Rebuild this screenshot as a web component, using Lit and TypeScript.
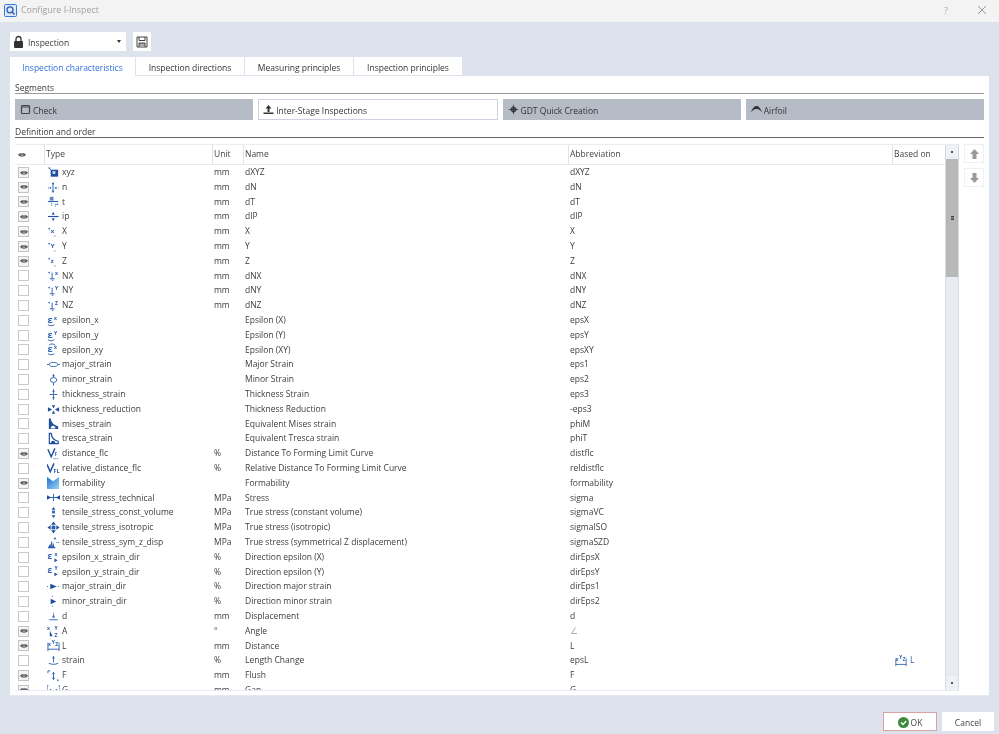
import { LitElement, html, css, svg } from "lit";
import { customElement } from "lit/decorators.js";

const B = "#2b5fb3";
const D = "#1f4f9e";
const letterIcon = (l: string) => svg`<path d="M1 4l2-1.200v2.400z M8.500 12.500l-1.500-1h3z" fill="${B}"/><text x="4" y="8.500" font-size="6.500" font-weight="700" fill="${B}" font-family="Open Sans">${l}</text>`;
const perp = (l: string) => svg`<path d="M1 4l2-1.200v2.400z M6 13l-1.400-1.400h2.800z" fill="${B}"/><path d="M3 10.500h5M5.500 4v6.500" stroke="${B}" stroke-width="1" fill="none"/><text x="8.500" y="6" font-size="5.500" font-weight="700" fill="${B}" font-family="Open Sans">${l}</text>`;
const eps = (l: string, extra = false) => svg`<text x="0.500" y="9.500" font-size="10" font-weight="700" fill="${B}" font-family="Open Sans">ε</text><text x="7.500" y="6" font-size="5.500" font-weight="700" fill="${B}" font-family="Open Sans">${l}</text><path d="M1 11.500c2 1.500 5 1.500 7 0" stroke="${B}" fill="none"/>${extra ? svg`<path d="M2 2.500c2-2 5-2 7 0" stroke="${B}" fill="none"/>` : ""}`;
const epsDir = (l: string) => svg`<text x="0.500" y="9" font-size="9" font-weight="700" fill="${B}" font-family="Open Sans">ε</text><text x="8" y="5.500" font-size="5.500" font-weight="700" fill="${B}" font-family="Open Sans">${l}</text><path d="M8 8l3.500 2L8 12z" fill="${D}"/>`;

const ICONS: Record<string, unknown> = {
  xyz: svg`<rect x="4" y="4" width="8" height="7.500" fill="${D}"/><rect x="6" y="5.500" width="3" height="3" fill="#cfdcf2"/><path d="M1 1.500l3 .5-1.600 1.600z" fill="${B}"/><path d="M3 3l2 2" stroke="${B}"/>`,
  n: svg`<path d="M1 7.500h2M10 7.500h2.500" stroke="${B}" stroke-dasharray="1 1"/><path d="M6.500 3v9" stroke="${B}"/><path d="M6.500 1L5 3.500h3z M6.500 13L5 10.500h3z M3 6l2 1.500L3 9z M10 6L8 7.500l2 1.500z" fill="${B}"/>`,
  t: svg`<path d="M1 7h11" stroke="${B}" stroke-width="1.200"/><rect x="3" y="2" width="4" height="4" fill="${B}" opacity=".75"/><path d="M5 8.500v3M9 9.500v3" stroke="${B}" stroke-dasharray="1 1"/><path d="M11 9l-1.400 1.600h2.800z" fill="${B}"/>`,
  ip: svg`<path d="M1 7h11.500" stroke="${D}" stroke-width="1.200"/><path d="M6.700 2L5 5h3.400z M6.700 12L5 9h3.400z" fill="${B}"/>`,
  X: letterIcon("x"), Y: letterIcon("Y"), Z: letterIcon("z"),
  NX: perp("x"), NY: perp("Y"), NZ: perp("Z"),
  ex: eps("x"), ey: eps("Y"), exy: eps("x", true),
  major: svg`<ellipse cx="7" cy="7" rx="4.500" ry="2.200" fill="none" stroke="${B}"/><path d="M0 7h2M12 7h2" stroke="${B}"/>`,
  minor: svg`<ellipse cx="7" cy="7.500" rx="3.500" ry="2.600" fill="none" stroke="${B}"/><path d="M7 1.500v3M7 10.500v3" stroke="${B}"/><path d="M7 1L5.500 3.500h3z" fill="${B}"/>`,
  thick: svg`<path d="M3 7h8" stroke="${B}"/><path d="M7 1v12" stroke="${B}" stroke-width=".8"/><path d="M7 5.500L5.500 3h3z M7 8.500L5.500 11h3z" fill="${B}"/>`,
  thickr: svg`<path d="M1 4.500L5.500 7 1 9.500z M13 4.500L8.500 7 13 9.500z M7 6L5.200 2.500h3.600z M7 8L5.200 11.500h3.600z" fill="${D}"/>`,
  mises: svg`<path d="M2 1.500h2c.5 4 3 7 8 8.500v3H2z" fill="${D}"/><path d="M4 12.500c0-2 1-3 2.500-3s2.500 1 2.500 3z" fill="#fff"/>`,
  tresca: svg`<path d="M2.500 1.500v11H12v-2.500C7.500 9 5 6 4.500 1.500z" fill="none" stroke="${D}" stroke-width="1.300"/><path d="M4 12.500c0-2 1-3 2.500-3s2.500 1 2.500 3z" fill="${D}"/>`,
  dist: svg`<path d="M1 2.500l3.500 8 4-9" stroke="${D}" stroke-width="1.500" fill="none"/><text x="8" y="10" font-size="5" font-weight="700" fill="${B}" font-family="Open Sans">F</text><path d="M7 12.500h6" stroke="${B}" stroke-dasharray="1 1"/>`,
  rel: svg`<path d="M0 2.500l3.500 8 4-9" stroke="${D}" stroke-width="1.600" fill="none"/><text x="7" y="12" font-size="6" font-weight="700" fill="${B}" font-family="Open Sans">FL</text>`,
  form: svg`<defs><linearGradient id="fg" x1="0" y1="0" x2="1" y2="1"><stop offset="0" stop-color="#1f6fd1"/><stop offset="1" stop-color="#9bd4f5"/></linearGradient></defs><path d="M0 0l6.500 4.500L13 0v13H0z" fill="url(#fg)"/>`,
  tech: svg`<path d="M0 7h14" stroke="${B}"/><path d="M7 3v8" stroke="${B}"/><path d="M0 4.500L4.500 7 0 9.500z M14 4.500L9.500 7 14 9.500z" fill="${D}"/>`,
  cvol: svg`<path d="M7 1L5 4h4z" fill="${D}"/><rect x="5.500" y="5" width="3" height="3" fill="${B}"/><path d="M7 13l-2-3h4z" fill="${D}"/>`,
  iso: svg`<path d="M7 0.500L4.500 4h5z M7 13.500L4.500 10h5z M0.500 7L4 4.500v5z M13.500 7L10 4.500v5z" fill="${D}"/><rect x="5" y="5" width="4" height="4" fill="${B}"/>`,
  sym: svg`<path d="M1 12.500h8M5 6v6" stroke="${B}" stroke-width="1.200"/><path d="M1.500 12l2-4 1 4z M8 12l-1.500-5L5.500 12z" fill="${D}"/><path d="M7 3.500L8.600 1l1.400 2.500z" fill="${B}"/><path d="M10 7h4" stroke="${B}" stroke-dasharray="1 1"/>`,
  xd: epsDir("x"), yd: epsDir("Y"),
  majd: svg`<path d="M0 7h2M12 7h2" stroke="${B}" stroke-dasharray="1 1"/><path d="M3.500 4l7 3-7 3z" fill="${D}"/>`,
  mind: svg`<path d="M6 1v2M6 11.500v2" stroke="${B}" stroke-dasharray="1 1"/><path d="M4 4l6 3-6 3z" fill="${D}"/>`,
  d: svg`<path d="M7 3v6" stroke="${B}" stroke-dasharray="1 1"/><path d="M7 4.500L5.500 8h3z" fill="${B}"/><path d="M2.500 10.500h9" stroke="${B}"/>`,
  A: svg`<text x="0" y="5" font-size="5.500" font-weight="700" fill="${B}" font-family="Open Sans">x</text><text x="8" y="5" font-size="5.500" font-weight="700" fill="${B}" font-family="Open Sans">Y</text><path d="M3 6v6h3z" fill="${D}"/><text x="8" y="12.500" font-size="5.500" font-weight="700" fill="${B}" font-family="Open Sans">Z</text>`,
  L: svg`<text x="1" y="7" font-size="5.500" font-weight="700" fill="${B}" font-family="Open Sans">x</text><text x="5" y="5" font-size="5.500" font-weight="700" fill="${B}" font-family="Open Sans">Y</text><text x="9" y="7" font-size="5.500" font-weight="700" fill="${B}" font-family="Open Sans">Z</text><path d="M1 4v9M13 4v9M1 11h12" stroke="${B}"/>`,
  strain: svg`<path d="M7 3v6" stroke="${B}"/><path d="M7 2L5.500 4.500h3z" fill="${B}"/><path d="M2 10c3 1.500 7 1.500 10 0" stroke="${B}" fill="none"/>`,
  F: svg`<path d="M1 2h2.500M1 2v2.500" stroke="${B}"/><path d="M7 4v7" stroke="${B}"/><path d="M7 3L5.500 5.500h3z M7 12L5.500 9.500h3z M13 12l-2-1.200v2.400z" fill="${B}"/>`,
  G: svg`<path d="M1.500 2H0v10h1.500M12.500 2H14v10h-1.500" stroke="${B}" fill="none"/><path d="M2.500 7h9" stroke="${B}"/><path d="M2 7l2.500-2v4z M12 7L9.500 5v4z" fill="${D}"/>`,
};

type Row = [string, string, string, string, boolean, string, string?];
const ROWS: Row[] = [
  ["xyz", "mm", "dXYZ", "dXYZ", true, "xyz"],
  ["n", "mm", "dN", "dN", true, "n"],
  ["t", "mm", "dT", "dT", true, "t"],
  ["ip", "mm", "dIP", "dIP", true, "ip"],
  ["X", "mm", "X", "X", true, "X"],
  ["Y", "mm", "Y", "Y", true, "Y"],
  ["Z", "mm", "Z", "Z", true, "Z"],
  ["NX", "mm", "dNX", "dNX", false, "NX"],
  ["NY", "mm", "dNY", "dNY", false, "NY"],
  ["NZ", "mm", "dNZ", "dNZ", false, "NZ"],
  ["epsilon_x", "", "Epsilon (X)", "epsX", false, "ex"],
  ["epsilon_y", "", "Epsilon (Y)", "epsY", false, "ey"],
  ["epsilon_xy", "", "Epsilon (XY)", "epsXY", false, "exy"],
  ["major_strain", "", "Major Strain", "eps1", false, "major"],
  ["minor_strain", "", "Minor Strain", "eps2", false, "minor"],
  ["thickness_strain", "", "Thickness Strain", "eps3", false, "thick"],
  ["thickness_reduction", "", "Thickness Reduction", "-eps3", false, "thickr"],
  ["mises_strain", "", "Equivalent Mises strain", "phiM", false, "mises"],
  ["tresca_strain", "", "Equivalent Tresca strain", "phiT", false, "tresca"],
  ["distance_flc", "%", "Distance To Forming Limit Curve", "distflc", true, "dist"],
  ["relative_distance_flc", "%", "Relative Distance To Forming Limit Curve", "reldistflc", false, "rel"],
  ["formability", "", "Formability", "formability", true, "form"],
  ["tensile_stress_technical", "MPa", "Stress", "sigma", false, "tech"],
  ["tensile_stress_const_volume", "MPa", "True stress (constant volume)", "sigmaVC", false, "cvol"],
  ["tensile_stress_isotropic", "MPa", "True stress (isotropic)", "sigmaISO", false, "iso"],
  ["tensile_stress_sym_z_disp", "MPa", "True stress (symmetrical Z displacement)", "sigmaSZD", false, "sym"],
  ["epsilon_x_strain_dir", "%", "Direction epsilon (X)", "dirEpsX", false, "xd"],
  ["epsilon_y_strain_dir", "%", "Direction epsilon (Y)", "dirEpsY", false, "yd"],
  ["major_strain_dir", "%", "Direction major strain", "dirEps1", false, "majd"],
  ["minor_strain_dir", "%", "Direction minor strain", "dirEps2", false, "mind"],
  ["d", "mm", "Displacement", "d", false, "d"],
  ["A", "°", "Angle", "∠", true, "A"],
  ["L", "mm", "Distance", "L", true, "L"],
  ["strain", "%", "Length Change", "epsL", false, "strain", "L"],
  ["F", "mm", "Flush", "F", true, "F"],
  ["G", "mm", "Gap", "G", true, "G"],
];

const eye = html`<svg class="eye" viewBox="0 0 10 7"><path d="M0 3.500c2-3.200 8-3.200 10 0-2 3.200-8 3.200-10 0z" fill="#555"/><circle cx="5" cy="3.500" r="1.800" fill="#ccc"/><circle cx="5" cy="3.500" r="1" fill="#333"/></svg>`;
const icon = (k: string) => html`<svg class="ic" viewBox="0 0 14 14">${ICONS[k]}</svg>`;

@customElement("app-root")
export class AppRoot extends LitElement {
  static styles = css`
    :host { display: flex; flex-direction: column; width: 999px; height: 734px; overflow: hidden; background: #dde3ec; font-family: "Open Sans", "Liberation Sans", sans-serif; font-size: 8.500px; color: #3a3a3a; filter: blur(0.3px); }
    svg { display: block; flex: none; }
    .title { height: 22px; flex: none; background: #f3f3f3; display: flex; align-items: center; padding: 0 0 2px 4px; box-sizing: border-box; color: #a0a0a0; font-size: 8.850px; }
    .logo { width: 13px; height: 13px; margin-right: 4px; }
    .spacer { flex: 1; }
    .q { width: 10px; text-align: center; margin-right: 25px; font-size: 9px; color: #aaa; }
    .x { width: 12px; height: 12px; margin-right: 11px; }
    .main { flex: 1; display: flex; flex-direction: column; padding: 10px 10px 0; min-height: 0; }
    .tools { display: flex; gap: 7px; height: 19px; flex: none; }
    .combo { width: 116px; background: #fff; display: flex; align-items: center; padding: 0 5px 0 3px; box-sizing: border-box; }
    .lbl { padding-top: 2px; }
    .combo .lock { width: 11px; height: 13px; margin-right: 4px; }
    .combo .caret { margin-left: auto; width: 0; height: 0; border-left: 2.500px solid transparent; border-right: 2.500px solid transparent; border-top: 3px solid #333; }
    .save { width: 18px; background: #fff; display: flex; align-items: center; justify-content: center; }
    .save svg { width: 12px; height: 12px; }
    .tabs { display: flex; gap: 1px; margin-top: 6px; height: 19px; flex: none; }
    .tab { background: #fff; height: 18px; padding-top: 2px; display: flex; align-items: center; justify-content: center; box-sizing: border-box; color: #333; }
    .tab.on { color: #2f6fe0; height: 19px; padding-top: 1px; }
    .panel { height: 620px; flex: none; background: #fff; padding: 6px 5px 0; box-sizing: border-box; border-bottom: 1px solid #e6eaf0; display: flex; flex-direction: column; }
    .sec { height: 11px; line-height: 11px; flex: none; }
    .rule { height: 1px; background: #9a9a9a; flex: none; }
    .rule.dark { background: #666; }
    .segs { display: flex; gap: 5px; margin: 5px 0 6px; flex: none; height: 21px; }
    .seg { flex: 1; background: #b5bcc6; display: flex; align-items: center; gap: 2px; padding-left: 5px; box-sizing: border-box; color: #333; }
    .seg .lbl { padding-top: 1px; }
    .seg.on { background: #fff; border: 1px solid #ccd3de; padding-left: 4px; }
    .seg svg { width: 11px; height: 11px; }
    .tw { display: flex; gap: 5px; margin-top: 6px; height: 547px; flex: none; }
    .table { flex: 1; display: flex; min-width: 0; border-top: 1px solid #e9edf2; border-bottom: 1px solid #e9edf2; height: 547px; box-sizing: border-box; }
    .grid { flex: 1; min-width: 0; overflow: hidden; display: flex; flex-direction: column; }
    .row { display: grid; grid-template-columns: 29px 168px 31px 325px 324px 1fr; height: 14.800px; line-height: 14.800px; flex: none; color: #3d3d3d; }
    .row > div { white-space: nowrap; overflow: hidden; }
    .head { height: 19px; line-height: 18px; border-bottom: 1px solid #e6eaf0; box-sizing: content-box; color: #444; }
    .head > div { border-left: 1px solid #dde3ec; padding-left: 1px; }
    .head > div:first-child { border-left: 0; padding: 0; display: flex; align-items: center; padding-left: 3px; }
    .check { display: flex; align-items: center; padding-left: 3px; }
    .box { width: 11px; height: 11px; border: 1px solid #c9c9c9; box-sizing: border-box; display: flex; align-items: center; justify-content: center; }
    .box.on { border-color: #c4c4c4; background: #f4f4f4; }
    .eye { width: 8px; height: 5.600px; }
    .type { display: flex; align-items: center; gap: 2px; padding-left: 3px; }
    .ic { width: 13px; height: 13px; }
    .unit, .name, .abbr { padding-left: 2px; }
    .abbr.dim { color: #b0b0b0; }
    .based { display: flex; align-items: center; gap: 3px; padding-left: 3px; color: #2b5fb3; }
    .based .ic { width: 12px; height: 12px; }
    .sb { width: 14px; flex: none; display: flex; flex-direction: column; background: #e8ebef; border-left: 1px solid #d5dce6; border-right: 1px solid #d5dce6; box-sizing: border-box; }
    .sb-btn { height: 14px; flex: none; background: #eef2f8; display: flex; align-items: center; justify-content: center; }
    .sb-btn i { width: 2px; height: 1.500px; background: #555; }
    .thumb { height: 118px; background: #b8b8b8; flex: none; display: flex; align-items: center; justify-content: center; }
    .thumb i { width: 3px; height: 4px; border-top: 1px solid #444; border-bottom: 1px solid #444; background: #777; box-sizing: border-box; }
    .sb .sp { flex: 1; }
    .side { display: flex; flex-direction: column; gap: 5px; width: 20px; flex: none; }
    .side div { height: 19px; border: 1px solid #eef0f3; box-sizing: border-box; display: flex; align-items: center; justify-content: center; }
    .side svg { width: 9px; height: 10px; }
    .foot { display: flex; justify-content: flex-end; gap: 5px; margin: 16px -5px 0 0; height: 19px; flex: none; }
    .foot button { font: inherit; color: #444; background: #fff; padding: 1px 0 0; margin: 0; box-sizing: border-box; display: flex; align-items: center; justify-content: center; gap: 2px; border: none; }
    .foot .ok { width: 54px; border: 1px solid #d9a3a6; }
    .ok svg { width: 11px; height: 11px; }
    .foot .cancel { width: 52px; }
  `;

  render() {
    const tabs: [string, number][] = [["Inspection characteristics", 125], ["Inspection directions", 108], ["Measuring principles", 108], ["Inspection principles", 108]];
    return html`
      <div class="title">
        <svg class="logo" viewBox="0 0 13 13"><rect x=".5" y=".5" width="12" height="12" rx="1" fill="#dbe7fb" stroke="#3c78d8"/><circle cx="6" cy="5.800" r="3" fill="none" stroke="#2a5db0" stroke-width="1.300"/><path d="M8.200 8l2.300 2.500" stroke="#2a5db0" stroke-width="1.300"/></svg>
        Configure I-Inspect
        <div class="spacer"></div>
        <div class="q">?</div>
        <svg class="x" viewBox="0 0 12 12"><path d="M2 2l8 8M10 2l-8 8" stroke="#999" fill="none"/></svg>
      </div>
      <div class="main">
        <div class="tools">
          <div class="combo">
            <svg class="lock" viewBox="0 0 11 13"><path d="M3 6V4a2.500 2.500 0 015 0v2" fill="none" stroke="#333" stroke-width="1.300"/><rect x="1" y="6" width="9" height="7" rx="1" fill="#333"/></svg>
            <span class="lbl">Inspection</span>
            <span class="caret"></span>
          </div>
          <div class="save"><svg viewBox="0 0 12 12"><path d="M1 1h10v10H1z" fill="none" stroke="#444" stroke-width="1"/><path d="M3 1v3.500h6V1" fill="none" stroke="#444"/><path d="M3 11V7h6v4" fill="#aaa" stroke="#444"/></svg></div>
        </div>
        <div class="tabs">
          ${tabs.map(([t, w], i) => html`<div class="tab ${i === 0 ? "on" : ""}" style="width:${w}px">${t}</div>`)}
        </div>
        <div class="panel">
          <div class="sec">Segments</div>
          <div class="rule"></div>
          <div class="segs">
            <div class="seg"><svg viewBox="0 0 11 11"><rect x="1.500" y="1.500" width="8" height="8" rx="1" fill="none" stroke="#444" stroke-width="1.200"/><path d="M1.500 3h8" stroke="#444"/></svg><span class="lbl">Check</span></div>
            <div class="seg on"><svg viewBox="0 0 11 11"><path d="M5.500 1L2.500 4.500h2V8h2V4.500h2z" fill="#333"/><path d="M.5 8.500h10V10H.5z" fill="#333"/></svg><span class="lbl">Inter-Stage Inspections</span></div>
            <div class="seg"><svg viewBox="0 0 11 11"><path d="M5.500 0l1 4.500 4.500 1-4.500 1-1 4.500-1-4.500L0 5.500l4.500-1z" fill="#333"/><circle cx="5.500" cy="5.500" r="2.500" fill="none" stroke="#333"/></svg><span class="lbl">GDT Quick Creation</span></div>
            <div class="seg"><svg viewBox="0 0 11 11"><path d="M0 8C2 3 4 2 5.500 2S9 3 11 8C8.500 5.500 7 5 5.500 5S2.500 5.500 0 8z" fill="#333"/></svg><span class="lbl">Airfoil</span></div>
          </div>
          <div class="sec">Definition and order</div>
          <div class="rule dark"></div>
          <div class="tw">
            <div class="table">
              <div class="grid">
                <div class="row head">
                  <div>${eye}</div><div>Type</div><div>Unit</div><div>Name</div><div>Abbreviation</div><div>Based on</div>
                </div>
                ${ROWS.map((r) => html`<div class="row">
                  <div class="check"><span class="box ${r[4] ? "on" : ""}">${r[4] ? eye : ""}</span></div>
                  <div class="type">${icon(r[5])}<span>${r[0]}</span></div>
                  <div class="unit">${r[1]}</div>
                  <div class="name">${r[2]}</div>
                  <div class="abbr ${r[3] === "∠" ? "dim" : ""}">${r[3]}</div>
                  <div class="based">${r[6] ? html`${icon(r[6])}${r[6]}` : ""}</div>
                </div>`)}
              </div>
              <div class="sb">
                <div class="sb-btn"><i></i></div>
                <div class="thumb"><i></i></div>
                <div class="sp"></div>
                <div class="sb-btn"><i></i></div>
              </div>
            </div>
            <div class="side">
              <div><svg viewBox="0 0 9 10"><path d="M4.500 0L0 5h2.500v5h4V5H9z" fill="#9a9a9a"/></svg></div>
              <div><svg viewBox="0 0 9 10"><path d="M4.500 10L0 5h2.500V0h4v5H9z" fill="#9a9a9a"/></svg></div>
            </div>
          </div>
        </div>
        <div class="foot">
          <button class="ok"><svg viewBox="0 0 11 11"><circle cx="5.500" cy="5.500" r="5.500" fill="#3d8a3a"/><path d="M3 5.500l2 2 3.200-3.500" stroke="#fff" stroke-width="1.300" fill="none"/></svg>OK</button>
          <button class="cancel">Cancel</button>
        </div>
      </div>
    `;
  }
}
